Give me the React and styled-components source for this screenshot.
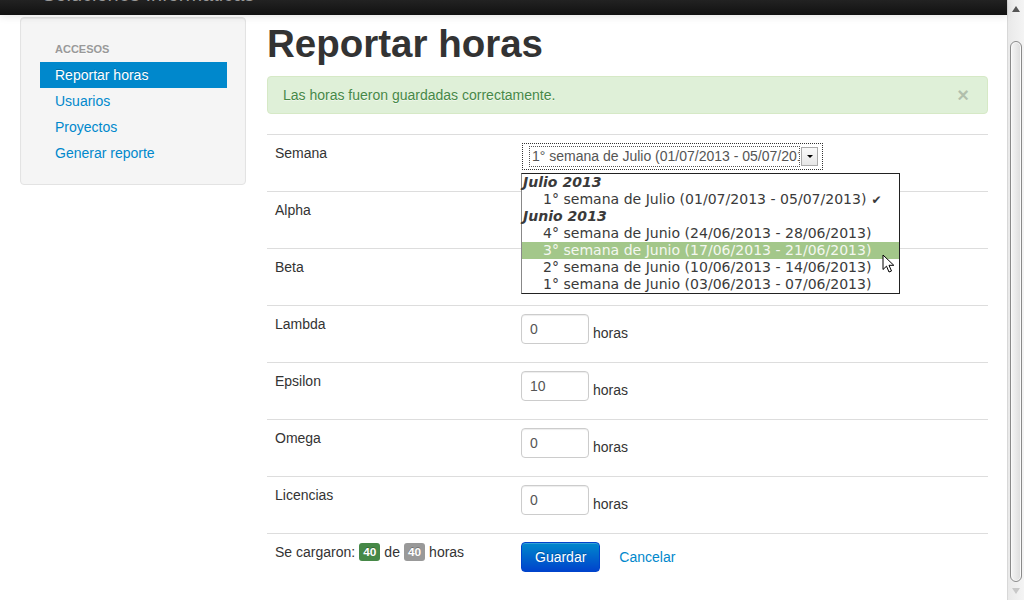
import React from 'react';
import styled, { createGlobalStyle } from 'styled-components';

const GlobalStyle = createGlobalStyle`
  html, body {
    margin: 0;
    padding: 0;
    background: #fff;
    overflow: hidden;
  }
  body {
    font-family: "Liberation Sans", Arial, Helvetica, sans-serif;
    font-size: 14px;
    line-height: 20px;
    color: #333;
  }
`;

const Screen = styled.div`
  display: flex;
  height: 600px;
  overflow: hidden;
`;

const Page = styled.div`
  flex: 1;
  min-width: 0;
  display: flex;
  flex-direction: column;
`;

const Navbar = styled.div`
  height: 15px;
  overflow: hidden;
  background: linear-gradient(#222, #111);
  box-shadow: 0 1px 8px rgba(0, 0, 0, 0.12);
  padding-left: 42px;
  position: relative;
  z-index: 2;
`;

const Brand = styled.div`
  margin-top: -16px;
  font-size: 20px;
  line-height: 20px;
  color: #999;
  white-space: nowrap;
`;

const Layout = styled.div`
  display: flex;
  align-items: flex-start;
  gap: 21px;
  padding: 2px 19px 0 20px;
`;

const Sidebar = styled.div`
  width: 226px;
  box-sizing: border-box;
  flex-shrink: 0;
  background: #f5f5f5;
  border: 1px solid #e3e3e3;
  border-radius: 4px;
  padding: 18px 18px 18px 19px;
  box-shadow: inset 0 1px 1px rgba(0, 0, 0, 0.05);
`;

const NavHeader = styled.div`
  padding: 3px 15px;
  font-size: 11px;
  font-weight: bold;
  line-height: 20px;
  color: #999;
  text-transform: uppercase;
  text-shadow: 0 1px 0 rgba(255, 255, 255, 0.5);
`;

const NavLink = styled.a`
  display: block;
  padding: 3px 15px;
  line-height: 20px;
  color: ${(p) => (p.$active ? '#fff' : '#0088cc')};
  background: ${(p) => (p.$active ? '#0088cc' : 'transparent')};
  text-decoration: none;
  text-shadow: ${(p) => (p.$active ? '0 -1px 0 rgba(0,0,0,0.2)' : 'none')};
`;

const Content = styled.div`
  flex: 1;
  min-width: 0;
`;

const Title = styled.h1`
  margin: 7px 0 12px;
  font-size: 38.5px;
  line-height: 40px;
  font-weight: bold;
  color: #333;
`;

const Alert = styled.div`
  display: flex;
  justify-content: space-between;
  align-items: center;
  padding: 8px 18px 8px 15px;
  margin-bottom: 20px;
  background: #dff0d8;
  border: 1px solid #d6e9c6;
  border-radius: 4px;
  color: #468847;
  text-shadow: 0 1px 0 rgba(255, 255, 255, 0.5);
`;

const Close = styled.span`
  font-size: 20px;
  font-weight: bold;
  line-height: 20px;
  color: #000;
  opacity: 0.2;
`;

const FormRow = styled.div`
  display: grid;
  grid-template-columns: 246px 1fr;
  border-top: 1px solid #ddd;
`;

const LabelCell = styled.div`
  padding: 8px;
  line-height: 20px;
  display: flex;
  align-items: flex-start;
  gap: 4px;
  white-space: nowrap;
`;

const ValueCell = styled.div`
  position: relative;
  padding: 8px;
  min-height: 40px;
  display: flex;
  align-items: flex-start;
`;

const NumberInput = styled.div`
  width: 68px;
  height: 30px;
  box-sizing: border-box;
  padding: 4px 8px;
  border: 1px solid #ccc;
  border-radius: 4px;
  box-shadow: inset 0 1px 1px rgba(0, 0, 0, 0.075);
  color: #555;
  line-height: 20px;
  background: #fff;
`;

const Unit = styled.span`
  margin: 9px 0 0 4px;
  line-height: 20px;
`;

const SelectBox = styled.div`
  margin-left: 1px;
  width: 301px;
  height: 27px;
  box-sizing: border-box;
  border: 1px dotted #333;
  background: #fff;
  display: flex;
  align-items: center;
  padding: 2px 4px 2px 6px;
  gap: 1px;
`;

const SelectText = styled.div`
  flex: 1;
  min-width: 0;
  height: 21px;
  box-sizing: border-box;
  border: 1px dotted #555;
  padding-left: 2px;
  overflow: hidden;
  white-space: nowrap;
  font-size: 14px;
  line-height: 19px;
  color: #555;
`;

const SelectButton = styled.div`
  width: 15px;
  height: 17px;
  background: linear-gradient(#fafafa, #e6e6e6);
  border: 1px solid #aaa;
  display: flex;
  align-items: center;
  justify-content: center;
`;

const Caret = styled.span`
  width: 0;
  height: 0;
  border-left: 3px solid transparent;
  border-right: 3px solid transparent;
  border-top: 3px solid #000;
`;

const Dropdown = styled.div`
  position: absolute;
  left: 8px;
  top: 38px;
  width: 379px;
  box-sizing: border-box;
  border: 1px solid #222;
  border-left-color: #888;
  background: #fff;
  z-index: 10;
  font-family: "DejaVu Sans", sans-serif;
  font-size: 14.05px;
  color: #3a3a3a;
`;

const GroupLabel = styled.div`
  height: 17px;
  line-height: 17px;
  padding-left: 1px;
  font-weight: bold;
  font-style: italic;
`;

const Option = styled.div`
  height: 17px;
  line-height: 17px;
  padding-left: 21px;
  white-space: nowrap;
  background: ${(p) => (p.$hover ? '#a3c78a' : 'transparent')};
  color: ${(p) => (p.$hover ? '#f4f7f0' : 'inherit')};
`;

const Check = styled.span`
  margin-left: 5px;
  font-size: 12px;
`;

const Cursor = styled.svg`
  position: absolute;
  left: 360px;
  top: 80px;
`;

const Badge = styled.span`
  display: inline-block;
  padding: 2px 4px;
  margin-top: 1px;
  font-size: 11.84px;
  font-weight: bold;
  line-height: 14px;
  color: #fff;
  background: ${(p) => p.$color};
  border-radius: 3px;
  text-shadow: 0 -1px 0 rgba(0, 0, 0, 0.25);
`;

const Actions = styled.div`
  display: flex;
  align-items: center;
  gap: 19px;
  padding-bottom: 20px;
`;

const Button = styled.button`
  font-family: inherit;
  font-size: 14px;
  line-height: 20px;
  padding: 4px 13px;
  color: #fff;
  border: 1px solid #04c;
  border-radius: 4px;
  background: linear-gradient(#08c, #04c);
  text-shadow: 0 -1px 0 rgba(0, 0, 0, 0.25);
  box-shadow: inset 0 1px 0 rgba(255, 255, 255, 0.2);
`;

const LinkButton = styled.a`
  color: #0088cc;
  text-decoration: none;
`;

const Scrollbar = styled.div`
  width: 17px;
  flex-shrink: 0;
  display: flex;
  flex-direction: column;
  align-items: center;
  background: linear-gradient(90deg, #e9e9e9, #f4f4f4);
  border-left: 1px solid #d8d8d8;
  box-sizing: border-box;
`;

const ArrowUp = styled.span`
  margin-top: 6px;
  width: 0;
  height: 0;
  border-left: 4px solid transparent;
  border-right: 4px solid transparent;
  border-bottom: 6px solid #555;
`;

const Thumb = styled.div`
  margin-top: 29px;
  width: 12px;
  height: 541px;
  box-sizing: border-box;
  border: 1px solid #8a8a8a;
  border-radius: 6px;
  background: linear-gradient(90deg, #f6f6f6, #dcdcdc);
  box-shadow: inset 0 0 0 1px #fafafa;
`;

const ArrowDown = styled.span`
  margin-top: 6px;
  width: 0;
  height: 0;
  border-left: 4px solid transparent;
  border-right: 4px solid transparent;
  border-top: 6px solid #c8c8c8;
`;

const fields = [
  { name: 'Alpha', value: '0' },
  { name: 'Beta', value: '0' },
  { name: 'Lambda', value: '0' },
  { name: 'Epsilon', value: '10' },
  { name: 'Omega', value: '0' },
  { name: 'Licencias', value: '0' },
];

const weeks = [
  { group: 'Julio 2013' },
  { label: '1° semana de Julio (01/07/2013 - 05/07/2013)', checked: true },
  { group: 'Junio 2013' },
  { label: '4° semana de Junio (24/06/2013 - 28/06/2013)' },
  { label: '3° semana de Junio (17/06/2013 - 21/06/2013)', hover: true },
  { label: '2° semana de Junio (10/06/2013 - 14/06/2013)' },
  { label: '1° semana de Junio (03/06/2013 - 07/06/2013)' },
];

const App = () => {
  return (
    <>
      <GlobalStyle />
      <Screen>
        <Page>
          <Navbar>
            <Brand>Soluciones Informáticas</Brand>
          </Navbar>
          <Layout>
            <Sidebar>
              <NavHeader>Accesos</NavHeader>
              <NavLink $active>Reportar horas</NavLink>
              <NavLink>Usuarios</NavLink>
              <NavLink>Proyectos</NavLink>
              <NavLink>Generar reporte</NavLink>
            </Sidebar>
            <Content>
              <Title>Reportar horas</Title>
              <Alert>
                <span>Las horas fueron guardadas correctamente.</span>
                <Close>×</Close>
              </Alert>

              <FormRow>
                <LabelCell>Semana</LabelCell>
                <ValueCell>
                  <SelectBox>
                    <SelectText>1° semana de Julio (01/07/2013 - 05/07/2013)</SelectText>
                    <SelectButton>
                      <Caret />
                    </SelectButton>
                  </SelectBox>
                  <Dropdown>
                    {weeks.map((w, i) =>
                      w.group ? (
                        <GroupLabel key={i}>{w.group}</GroupLabel>
                      ) : (
                        <Option key={i} $hover={w.hover}>
                          {w.label}
                          {w.checked && <Check>✔</Check>}
                        </Option>
                      )
                    )}
                    <Cursor width="13" height="20" viewBox="0 0 13 20">
                      <path
                        d="M1 1 L1 15.5 L4.5 12.2 L7 18 L9.5 17 L7 11.3 L11.8 11.3 Z"
                        fill="#fff"
                        stroke="#000"
                        strokeWidth="1"
                        strokeLinejoin="miter"
                      />
                    </Cursor>
                  </Dropdown>
                </ValueCell>
              </FormRow>

              {fields.map((f) => (
                <FormRow key={f.name}>
                  <LabelCell>{f.name}</LabelCell>
                  <ValueCell>
                    <NumberInput>{f.value}</NumberInput>
                    <Unit>horas</Unit>
                  </ValueCell>
                </FormRow>
              ))}

              <FormRow>
                <LabelCell>
                  Se cargaron: <Badge $color="#468847">40</Badge> de{' '}
                  <Badge $color="#999">40</Badge> horas
                </LabelCell>
                <ValueCell>
                  <Actions>
                    <Button>Guardar</Button>
                    <LinkButton>Cancelar</LinkButton>
                  </Actions>
                </ValueCell>
              </FormRow>
            </Content>
          </Layout>
        </Page>
        <Scrollbar>
          <ArrowUp />
          <Thumb />
          <ArrowDown />
        </Scrollbar>
      </Screen>
    </>
  );
};

export default App;
